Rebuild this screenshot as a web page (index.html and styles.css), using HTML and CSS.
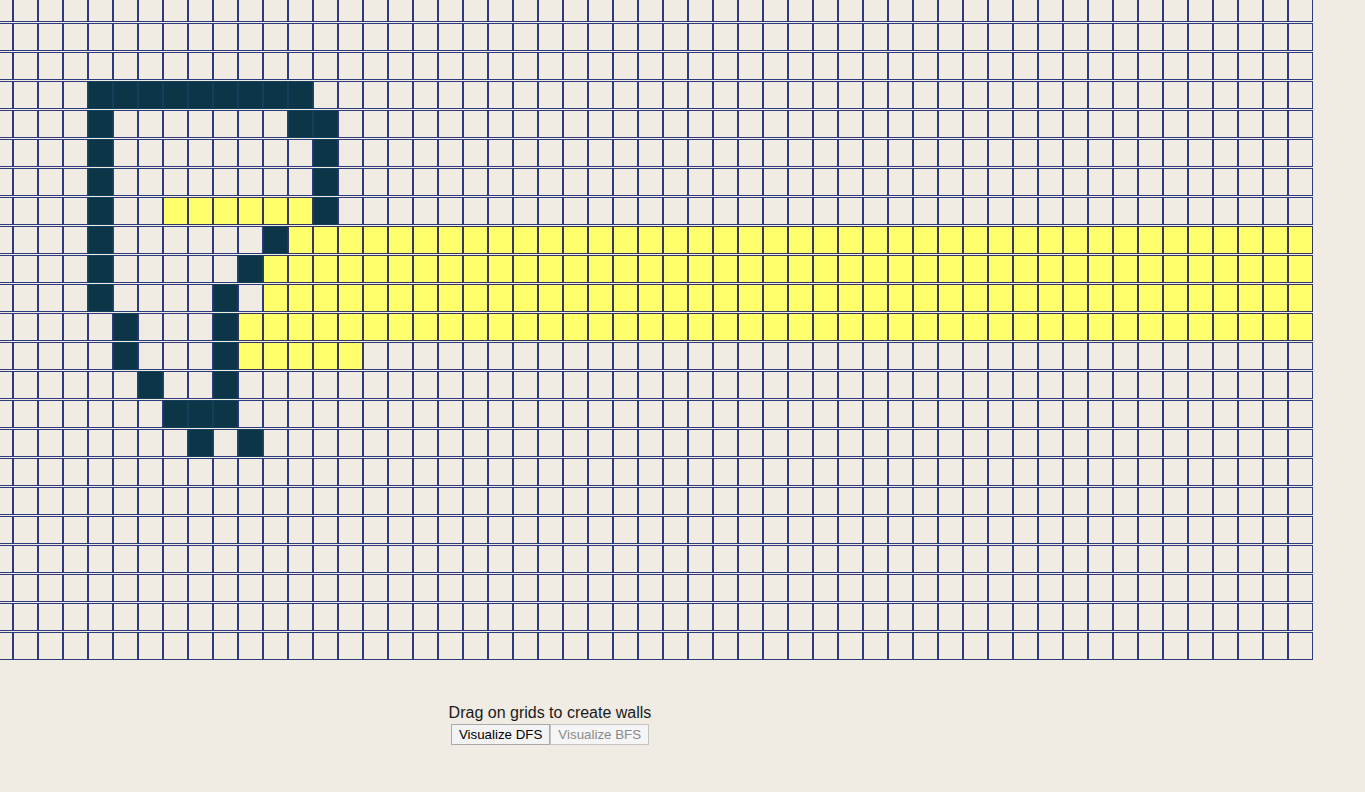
FILE: index.html
```html
<!DOCTYPE html>
<html lang="en">
<head>
<meta charset="utf-8">
<title>Pathfinding Visualizer</title>
<link rel="stylesheet" href="styles.css">
</head>
<body>
<main class="app">
  <div class="grid" id="grid"></div>
  <section class="controls">
    <p class="hint">Drag on grids to create walls</p>
    <div class="buttons">
      <button class="btn" type="button">Visualize DFS</button>
      <button class="btn" type="button" disabled>Visualize BFS</button>
    </div>
  </section>
</main>
<script src="script.js"></script>
</body>
</html>
```

FILE: styles.css
```css
html, body {
  margin: 0;
  padding: 0;
  background: #f0ebe3;
  overflow: hidden;
}

body {
  font-family: "Liberation Sans", Arial, sans-serif;
  color: #111;
}

.app {
  display: flex;
  flex-direction: column;
}

.grid {
  display: flex;
  flex-direction: column;
  margin: -6px 0 0 -12px;
}

.row {
  display: flex;
  margin-bottom: 1px;
}

.cell {
  flex: none;
  box-sizing: border-box;
  width: 25px;
  height: 28px;
  border: 1px solid #2e3a7e;
  background: #f0ebe3;
}

.cell.wall {
  background: #0c3547;
  border-color: #12405a;
}

.cell.visited {
  background: #ffff6b;
  border-color: #34385e;
}

.controls {
  width: 1100px;
  margin-top: 42px;
  text-align: center;
}

.hint {
  margin: 0;
  font-size: 16px;
  line-height: 20px;
  color: #1a1a1a;
}

.buttons {
  display: flex;
  justify-content: center;
  gap: 0;
  margin-top: 1px;
}

.btn {
  font-family: "Liberation Sans", Arial, sans-serif;
  font-size: 13.33px;
  line-height: 15px;
  padding: 2px 7px;
  background: #f3f3f3;
  border: 1px solid #a9a9a9;
  border-radius: 0;
  color: #000;
}

.btn:disabled {
  color: #8a8a8a;
  border-color: #c4c4c4;
  background: #f5f5f5;
}
```

FILE: script.js
```js
(function () {
  var ROWS = 23, COLS = 53;
  var marks = [
    [3, 4, 12, 'wall'],
    [4, 4, 4, 'wall'], [4, 12, 13, 'wall'],
    [5, 4, 4, 'wall'], [5, 13, 13, 'wall'],
    [6, 4, 4, 'wall'], [6, 13, 13, 'wall'],
    [7, 4, 4, 'wall'], [7, 7, 12, 'visited'], [7, 13, 13, 'wall'],
    [8, 4, 4, 'wall'], [8, 11, 11, 'wall'], [8, 12, 52, 'visited'],
    [9, 4, 4, 'wall'], [9, 10, 10, 'wall'], [9, 11, 52, 'visited'],
    [10, 4, 4, 'wall'], [10, 9, 9, 'wall'], [10, 11, 52, 'visited'],
    [11, 5, 5, 'wall'], [11, 9, 9, 'wall'], [11, 10, 52, 'visited'],
    [12, 5, 5, 'wall'], [12, 9, 9, 'wall'], [12, 10, 14, 'visited'],
    [13, 6, 6, 'wall'], [13, 9, 9, 'wall'],
    [14, 7, 9, 'wall'],
    [15, 8, 8, 'wall'], [15, 10, 10, 'wall']
  ];
  var state = [];
  for (var r = 0; r < ROWS; r++) {
    state.push(new Array(COLS).fill(''));
  }
  marks.forEach(function (m) {
    for (var c = m[1]; c <= m[2]; c++) state[m[0]][c] = m[3];
  });
  var grid = document.getElementById('grid');
  var frag = document.createDocumentFragment();
  for (var i = 0; i < ROWS; i++) {
    var row = document.createElement('div');
    row.className = 'row';
    for (var j = 0; j < COLS; j++) {
      var cell = document.createElement('div');
      cell.className = 'cell' + (state[i][j] ? ' ' + state[i][j] : '');
      row.appendChild(cell);
    }
    frag.appendChild(row);
  }
  grid.appendChild(frag);
})();
```
